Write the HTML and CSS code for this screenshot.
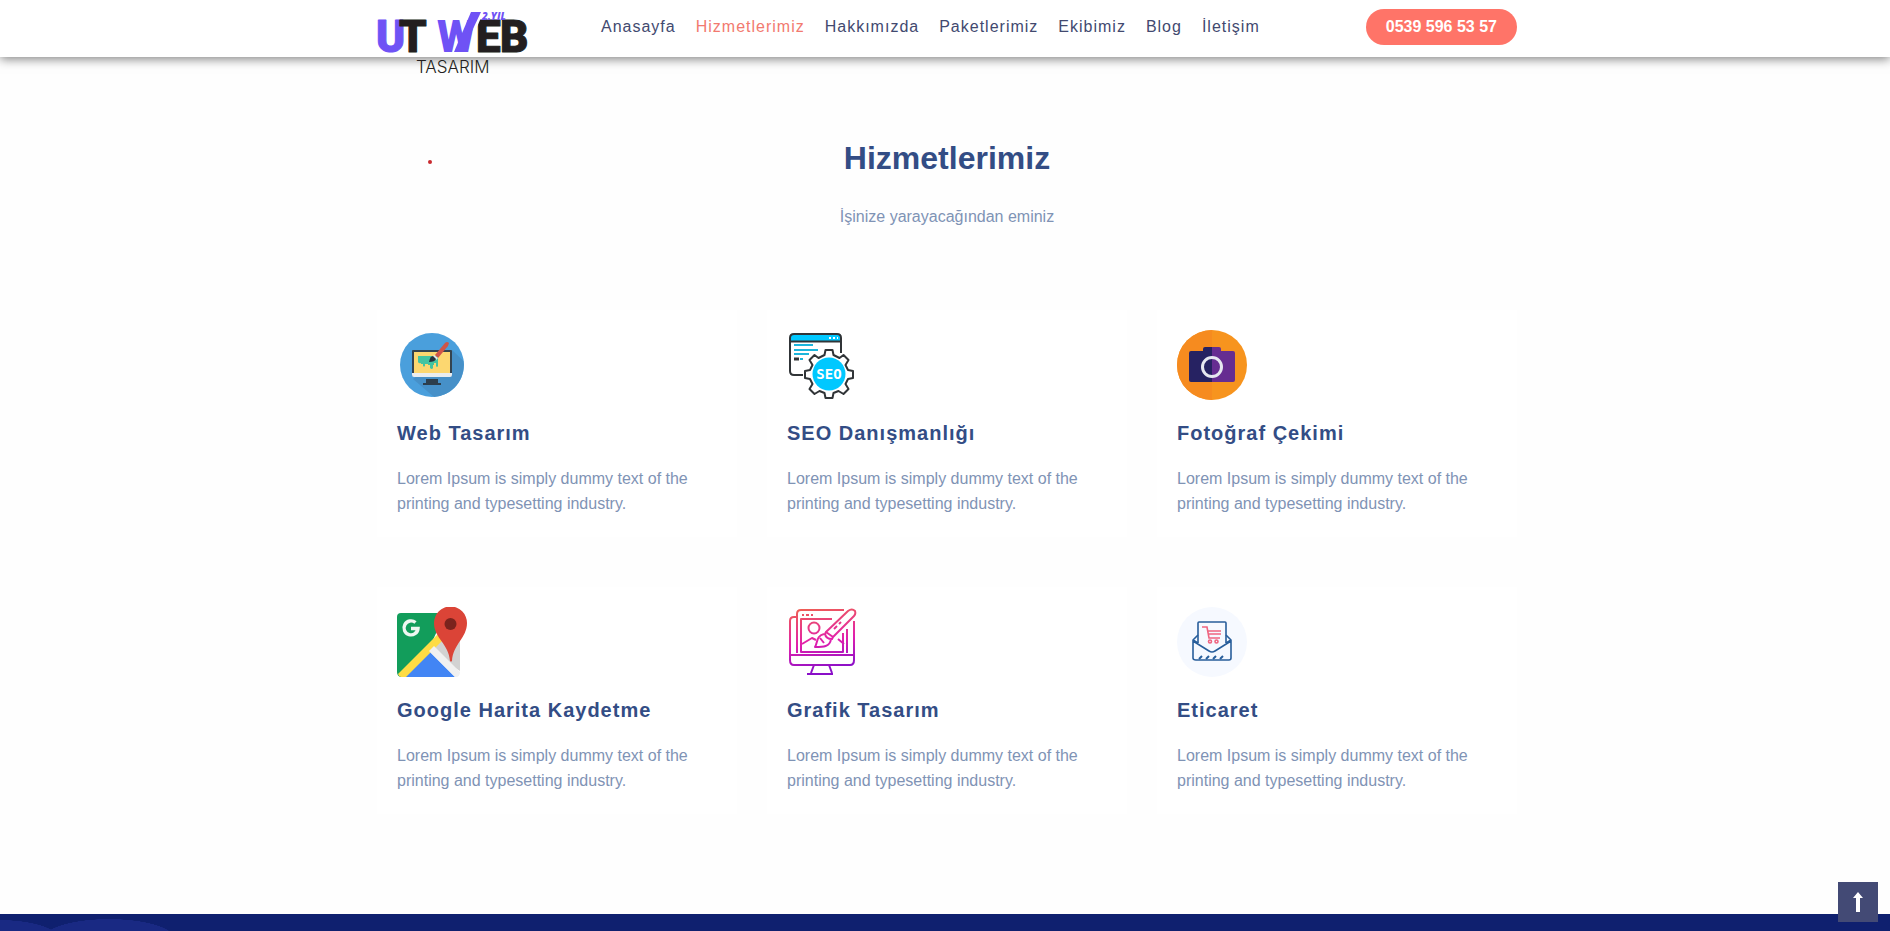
FILE: index.html
```html
<!DOCTYPE html>
<html lang="tr">
<head>
<meta charset="utf-8">
<title>UT Web Tasarım</title>
<link rel="stylesheet" href="styles.css">
</head>
<body>
<header class="header">
  <div class="container header-row">
    <a class="logo" href="#" aria-label="UT Web Tasarım">
      <svg width="156" height="70" viewBox="0 0 156 70">
        <g class="logo-main">
          <text class="violet" x="-1" y="43">U</text>
          <text class="ink" x="22" y="43">T</text>
          <text class="ink" x="99" y="43">E</text>
          <text class="ink" x="123" y="43">B</text>
        </g>
        <path fill="#fff" d="M95 2h12L88 45H78z"/>
        <text class="logo-w" x="60" y="43">W</text>
        <path fill="#6f52f5" d="M94 3h10L85 43H77z"/>
        <text class="logo-year" x="105" y="11">2.YIL</text>
        <text class="logo-sub" x="39" y="64">TASARIM</text>
      </svg>
    </a>
    <nav class="nav">
      <a href="#">Anasayfa</a>
      <a class="active" href="#">Hizmetlerimiz</a>
      <a href="#">Hakkımızda</a>
      <a href="#">Paketlerimiz</a>
      <a href="#">Ekibimiz</a>
      <a href="#">Blog</a>
      <a href="#">İletişim</a>
    </nav>
    <a class="phone" href="tel:05395965357">0539 596 53 57</a>
  </div>
</header>

<main class="services">
  <span class="dot"></span>
  <div class="container">
    <h2 class="title">Hizmetlerimiz</h2>
    <p class="subtitle">İşinize yarayacağından eminiz</p>
    <div class="grid">
      <article class="card">
        <svg class="icon" viewBox="0 0 70 70">
          <circle cx="35" cy="35" r="32" fill="#4a9fdc"/>
          <path d="M55 20 66.500 31A32 32 0 0 1 37 67L16 49z" fill="#4690c8"/>
          <path d="M29 49h12v4h3v2H26v-2h3z" fill="#2c3e4d"/>
          <rect x="15" y="20" width="40" height="26" rx="1" fill="#34434f"/>
          <rect x="17" y="22" width="36" height="22" fill="#fcd770"/>
          <path d="M15 43h40v2q0 2-2 2H17q-2 0-2-2z" fill="#e9edf0"/>
          <path d="M21 26h20v10q-1 2-2 0v-3h-2v2h-1v3q-1 2-3 0v-3h-2v-1h-3v2q-1 1-2 0v-2h-2v-1q-2 1-3-1z" fill="#44c4a1"/>
          <path d="M38 25 48 13q2-2 4 0l-1 3-10 12z" fill="#cf5549"/>
          <path d="m37 25 4 3-2 2-4-3z" fill="#e6e9ed"/>
          <path d="M32 32q1-6 4-6l3 3q-1 3-7 3z" fill="#27333c"/>
        </svg>
        <h3>Web Tasarım</h3>
        <p>Lorem Ipsum is simply dummy text of the printing and typesetting industry.</p>
      </article>
      <article class="card">
        <svg class="icon" viewBox="0 0 70 70">
          <path d="M3 11V7q0-3 3-3h45q3 0 3 3v4z" fill="#00c8ff"/>
          <path d="M16 45H7q-4 0-4-4V8q0-4 4-4h43q4 0 4 4v15M3 11.500h51" fill="none" stroke="#303437" stroke-width="2"/>
          <path d="M42 8h2m2 0h2m2 0h1" stroke="#fff" stroke-width="2"/>
          <path d="M7 15h19M7 20h24M7 24h15M13 29h3" stroke="#1bb5dc" stroke-width="2"/>
          <path d="M7 29h5" stroke="#303437" stroke-width="3"/>
          <g fill="#fff" stroke="#303437" stroke-width="2" stroke-linejoin="round">
            <path d="M38.500 20h7l1 5 6 3 4-3 5 5-3 5 2.500 5 5 1v7l-5 1L58.500 54l3 5-5 5-5-3-5 2-1 5h-7l-1-5-5-2-5 3-5-5 3-5-2.500-5-5-1v-7l5-1 2.500-5-3-5 5-5 4 3 6-3z"/>
          </g>
          <circle cx="42" cy="44" r="16.500" fill="#00c8ff"/>
          <text class="seo-text" x="42" y="49" text-anchor="middle">SEO</text>
        </svg>
        <h3>SEO Danışmanlığı</h3>
        <p>Lorem Ipsum is simply dummy text of the printing and typesetting industry.</p>
      </article>
      <article class="card">
        <svg class="icon" viewBox="0 0 70 70">
          <circle cx="35" cy="35" r="35" fill="#f7941e"/>
          <path d="M35 0a35 35 0 0 0 0 70z" fill="#f68b1f"/>
          <path d="M35 17h-7q-2 0-2 2v2H14q-2 0-2 2v27q0 2 2 2h21z" fill="#262262"/>
          <path d="M35 17h7q2 0 2 2v2h12q2 0 2 2v27q0 2-2 2H35z" fill="#662d91"/>
          <circle cx="35" cy="37" r="9.500" fill="none" stroke="#e6e7f0" stroke-width="3"/>
        </svg>
        <h3>Fotoğraf Çekimi</h3>
        <p>Lorem Ipsum is simply dummy text of the printing and typesetting industry.</p>
      </article>
      <article class="card">
        <svg class="icon" viewBox="0 0 70 70">
          <path d="M4 6h44L32 42 5 70q-5 0-5-5V10q0-4 4-4z" fill="#129d5b"/>
          <path d="M42 34 63 20v44L32 44z" fill="#d2d2d2"/>
          <path d="M6 70 32 44l26 26z" fill="#4285f4"/>
          <path d="M1 67 45 23v11L9 70H4q-2 0-3-3z" fill="#fedc44"/>
          <path d="m32 44 5-5 26 26q0 5-4 5h-1z" fill="#f1f1f1"/>
          <path d="M18.500 15.500a7 7 0 1 0 2.500 6h-7" fill="none" stroke="#eef7f1" stroke-width="3.400"/>
          <path d="M53 54C52 37 37 31 37 16a16.500 16.500 0 0 1 33 0C70 31 56 37 55 54q-1 1-2 0z" fill="#db4437"/>
          <circle cx="53.500" cy="17" r="6" fill="#7b231d"/>
        </svg>
        <h3>Google Harita Kaydetme</h3>
        <p>Lorem Ipsum is simply dummy text of the printing and typesetting industry.</p>
      </article>
      <article class="card">
        <svg class="icon" viewBox="0 0 70 70">
          <defs>
            <linearGradient id="paint" gradientUnits="userSpaceOnUse" x1="28" y1="0" x2="40" y2="70">
              <stop offset="0" stop-color="#ef5d55"/>
              <stop offset="0.500" stop-color="#e11fae"/>
              <stop offset="0.900" stop-color="#8a0fc8"/>
            </linearGradient>
          </defs>
          <g fill="none" stroke="url(#paint)" stroke-width="2" stroke-linejoin="round">
            <path d="M10 46V7q0-4 4-4h43M10 10H7q-4 0-4 4v39q0 5 4 5h56q4 0 4-5V14M3 48h64M60 22v24"/>
            <path d="M27 58l-3 8m18-8 3 8M20 67h26"/>
            <path d="M45 12H14v33h42V26M15 8h2m2 0h3m2 0h2"/>
            <circle cx="27" cy="21" r="5.500"/>
            <path d="m15 37 10-6 4 2M51 32l6 5"/>
            <path d="M39 25 61 4q4-3 7 0 1 3-1 5L46 30zM39 25l-1 2q1 5 7 5l1-2M37 27c-8 2-6 8-9 13 8 0 15 0 16-8M33 31l4 5M47 22l3-3m2-2 2-2"/>
          </g>
        </svg>
        <h3>Grafik Tasarım</h3>
        <p>Lorem Ipsum is simply dummy text of the printing and typesetting industry.</p>
      </article>
      <article class="card">
        <svg class="icon" viewBox="0 0 70 70">
          <circle cx="35" cy="35" r="35" fill="#f6f9ff"/>
          <g fill="none" stroke="#285e9b" stroke-width="1.600" stroke-linejoin="round">
            <path d="M21 36V16q0-1 1-1h26q1 0 1 1v20"/>
            <path d="m21 28-5 5v18q0 2 3 2h33q2 0 2-2V33l-5-5M16 34l16 10q3 2 6 0l16-10M16 33l5 3m28 0 5-3"/>
            <path d="m22 52 3-3m4 3 3-3m4 3 3-3m4 3 3-3" stroke-width="2"/>
          </g>
          <g fill="none" stroke="#ef6480" stroke-width="1.600">
            <path d="M25 20h5l2 11h11M31 24h13M32 27h12"/>
            <circle cx="33" cy="34.500" r="1.500"/>
            <circle cx="39.500" cy="34.500" r="1.500"/>
          </g>
        </svg>
        <h3>Eticaret</h3>
        <p>Lorem Ipsum is simply dummy text of the printing and typesetting industry.</p>
      </article>
    </div>
  </div>
</main>

<footer class="footer"></footer>
<button class="to-top" type="button" aria-label="Yukarı çık">
  <svg width="10" height="20" viewBox="0 0 10 20"><path d="M5 0 10 6H7v14H3V6H0z" fill="#fff"/></svg>
</button>
</body>
</html>
```

FILE: styles.css
```css
* { box-sizing: border-box; }

body {
  margin: 0;
  min-height: 100vh;
  display: flex;
  flex-direction: column;
  background: #fefefe;
  color: #7f93b5;
  font-family: "Liberation Sans", Arial, sans-serif;
  font-size: 16px;
  line-height: 25px;
}

h2, h3, p { margin: 0; }
a { text-decoration: none; }

.container {
  width: 100%;
  max-width: 1140px;
  margin: 0 auto;
}

.header {
  position: relative;
  z-index: 2;
  padding-left: 4px;
  background: #fff;
  box-shadow: 0 2px 10px rgba(0, 0, 0, 0.5);
}

.header-row {
  display: flex;
  align-items: flex-start;
  height: 57px;
  padding-top: 9px;
}

.logo { flex: none; width: 156px; }
.logo svg { display: block; overflow: visible; }
.violet { fill: #6f52f5; stroke: #6f52f5; }
.ink { fill: #231f20; stroke: #231f20; }
.logo-main {
  font: 900 44px Roboto, sans-serif;
  stroke-width: 1px;
  stroke-linejoin: round;
}
.logo-w { font: 900 44px Roboto, sans-serif; fill: #6f52f5; }
.logo-year { font: italic 800 10px "Open Sans", sans-serif; fill: #6f52f5; }
.logo-sub { font: 300 17px Inter, sans-serif; fill: #231f20; }

.nav {
  display: flex;
  gap: 20px;
  margin-left: 68px;
  padding-top: 5px;
}

.nav a {
  color: #42496f;
  letter-spacing: 1px;
}

.nav .active { color: #f27a6f; }

.phone {
  margin-left: auto;
  padding: 0 20px;
  border-radius: 18px;
  background: #ff7468;
  color: #fff;
  font-weight: 700;
  line-height: 36px;
}

.services {
  position: relative;
  padding: 81px 0 100px 4px;
}

.dot {
  position: absolute;
  top: 103px;
  left: calc(50% - 517px);
  width: 4px;
  height: 4px;
  border-radius: 50%;
  background: #c92a2f;
}

.title {
  color: #334d85;
  font-size: 32px;
  line-height: 40px;
  text-align: center;
}

.subtitle {
  margin-top: 26px;
  text-align: center;
}

.grid {
  display: grid;
  grid-template-columns: repeat(3, 1fr);
  gap: 50px 30px;
  margin-top: 81px;
}

.card {
  padding: 20px 20px 21px;
  background: #fff;
}

.icon {
  display: block;
  width: 70px;
  height: 70px;
}

.seo-text { font: 700 14px "DejaVu Sans Mono", monospace; fill: #fff; }

.card h3 {
  margin: 21px 0 20px;
  color: #334d85;
  font-size: 20px;
  line-height: 25px;
  letter-spacing: 1px;
}

.footer {
  flex: 1;
  min-height: 17px;
  background:
    radial-gradient(ellipse 60px 20px at 0 26px, #192983 99%, transparent),
    radial-gradient(ellipse 66px 20px at 109px 25px, #192983 99%, transparent),
    #0f206f;
}

.to-top {
  position: fixed;
  right: 12px;
  bottom: 9px;
  display: flex;
  align-items: center;
  justify-content: center;
  width: 40px;
  height: 40px;
  padding: 0;
  border: 0;
  background: #434a75;
}
```
